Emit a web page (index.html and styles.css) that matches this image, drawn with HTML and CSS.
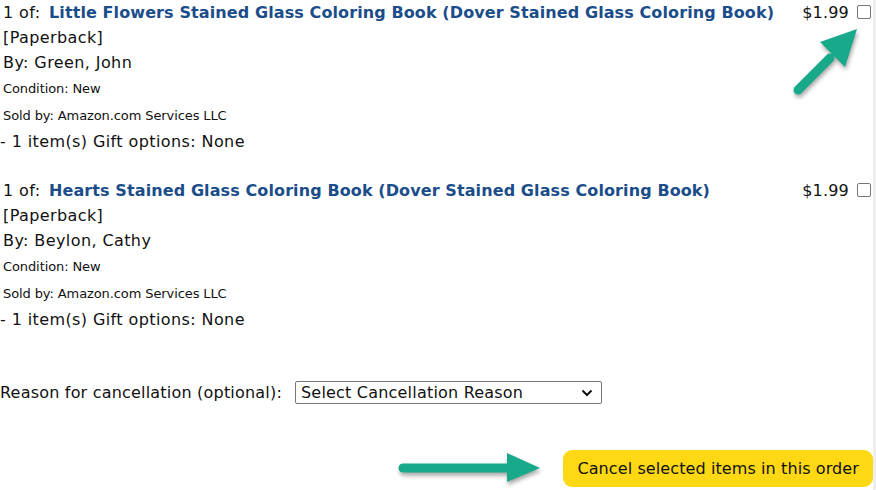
FILE: index.html
```html
<!DOCTYPE html>
<html lang="en">
<head>
    <meta charset="UTF-8">
    <title>Cancel items</title>
    <link rel="stylesheet" href="styles.css">
</head>
<body>
    <div class="page">

        <!-- item 1 -->
        <div class="item">
            <div class="item-info">
                <div class="line">1 of: <a class="title" href="#">Little Flowers Stained Glass Coloring Book (Dover Stained Glass Coloring Book)</a></div>
                <div class="line">[Paperback]</div>
                <div class="line">By: Green, John</div>
                <div class="small">Condition: New</div>
                <div class="small">Sold by: Amazon.com Services LLC</div>
                <div class="line qty">- 1 item(s) Gift options: None</div>
            </div>
            <div class="item-price">
                <span>$1.99</span>
                <input type="checkbox" class="check">
            </div>
        </div>

        <!-- item 2 -->
        <div class="item">
            <div class="item-info">
                <div class="line">1 of: <a class="title" href="#">Hearts Stained Glass Coloring Book (Dover Stained Glass Coloring Book)</a></div>
                <div class="line">[Paperback]</div>
                <div class="line">By: Beylon, Cathy</div>
                <div class="small">Condition: New</div>
                <div class="small">Sold by: Amazon.com Services LLC</div>
                <div class="line qty">- 1 item(s) Gift options: None</div>
            </div>
            <div class="item-price">
                <span>$1.99</span>
                <input type="checkbox" class="check">
            </div>
        </div>

        <div class="reason">
            <label for="reason">Reason for cancellation (optional):</label>
            <div class="select-box">
                <span>Select Cancellation Reason</span>
                <svg width="12" height="8" viewBox="0 0 12 8"><path d="M1.5 1.5 L6 6 L10.5 1.5" fill="none" stroke="#111" stroke-width="2"/></svg>
            </div>
        </div>

        <div class="actions">
            <button class="cancel-btn">Cancel selected items in this order</button>
        </div>

        <!-- annotation arrows -->
        <svg class="arrow arrow-up" width="80" height="80" viewBox="0 0 80 80">
            <line x1="8" y1="68" x2="40" y2="36" stroke="#17a98a" stroke-width="9" stroke-linecap="round"/>
            <polygon points="67,7 30,20 55,45" fill="#17a98a"/>
        </svg>
        <svg class="arrow arrow-right" width="150" height="40" viewBox="0 0 150 40">
            <line x1="6" y1="20" x2="115" y2="20" stroke="#17a98a" stroke-width="9" stroke-linecap="round"/>
            <polygon points="110,5 143,20 110,34" fill="#17a98a"/>
        </svg>
    </div>
</body>
</html>
```

FILE: styles.css
```css
body {
    margin: 0;
    padding: 0;
    background: #fff;
    font-family: "DejaVu Sans", Verdana, sans-serif;
    color: #111;
}

.page {
    position: relative;
    height: 490px;
    padding: 0 2px 0 3px;
    border-right: 3px solid #eeeeee;
}

/* --- items --- */
.item {
    display: flex;
    justify-content: space-between;
    margin-bottom: 24px;
}

.line {
    font-size: 16px;
    letter-spacing: 0.4px;
    line-height: 25px;
}

.qty {
    margin-left: -3px;
}

.small {
    font-size: 13px;
    letter-spacing: -0.1px;
    line-height: 27px;
}

.title {
    margin-left: 3px;
    color: #1b4d8a;
    font-weight: bold;
    letter-spacing: 0.1px;
    text-decoration: none;
}

.item-price {
    display: flex;
    align-items: flex-start;
    gap: 8px;
    font-size: 16px;
    letter-spacing: 0.2px;
    line-height: 25px;
}

.check {
    appearance: none;
    width: 14px;
    height: 14px;
    margin: 5px 0 0 0;
    border: 1px solid #767676;
    border-radius: 2px;
    background: #fff;
}

/* --- reason --- */
.reason {
    display: flex;
    align-items: center;
    gap: 13px;
    margin: 49px 0 0 -3px;
    font-size: 16px;
    letter-spacing: 0.2px;
}

.select-box {
    display: flex;
    align-items: center;
    justify-content: space-between;
    width: 292px;
    height: 21px;
    padding: 0 8px 0 5px;
    border: 1px solid #767676;
    border-radius: 2px;
    font-size: 16px;
}

/* --- button --- */
.actions {
    display: flex;
    justify-content: flex-end;
    margin: 46px -2px 0 0;
}

.cancel-btn {
    background: #ffd814;
    border: none;
    border-radius: 9px;
    height: 37px;
    padding: 0 14px;
    font-family: "DejaVu Sans", Verdana, sans-serif;
    font-size: 16px;
    letter-spacing: 0.1px;
    color: #0f1111;
}

/* --- annotation arrows --- */
.arrow {
    position: absolute;
    filter: drop-shadow(1px 3px 2px rgba(0, 0, 0, 0.35));
}

.arrow-up {
    left: 790px;
    top: 22px;
}

.arrow-right {
    left: 397px;
    top: 448px;
}
```
